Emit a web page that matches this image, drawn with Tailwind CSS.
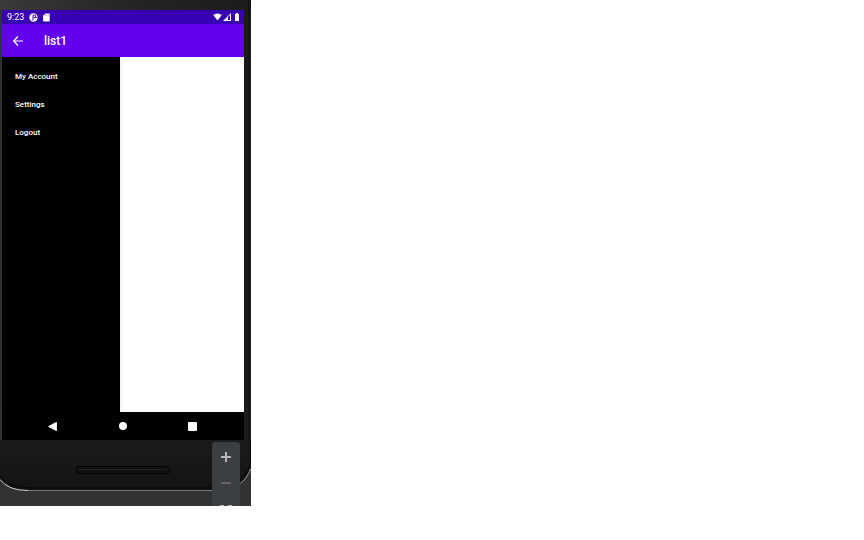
<!DOCTYPE html>
<html lang="en">
<head>
<meta charset="utf-8">
<title>list1</title>
<script src="https://cdn.jsdelivr.net/npm/@tailwindcss/browser@4"></script>
</head>
<body class="bg-white font-['Roboto',sans-serif] text-white">
<main class="relative w-[251px] overflow-hidden bg-linear-to-r from-[#343434] to-[#1b1b1b] to-25%">
  <div class="h-[10px] border-r border-[#0c0c0c] bg-linear-to-r from-[#3a3a3a] via-[#252525] to-[#1c1c1c]"></div>
  <section class="ml-[2px] mr-[7px] flex flex-col bg-black">
    <div class="flex h-[14px] items-center bg-[#3700b3] pl-[5px] pr-1 text-[9px] leading-[14px]">
      <span>9:23</span>
      <svg class="ml-[5px] size-[9px]" viewBox="0 0 9 9" aria-hidden="true"><circle cx="4.5" cy="4.5" r="4.2" fill="#fff"/><path d="M4 7.500V2H6.500V4.600H4M6.500 4.500H8.500" fill="none" stroke="#3700b3" stroke-width=".9"/></svg>
      <svg class="ml-[5px] h-[9px] w-[7px]" viewBox="0 0 7 9" aria-hidden="true"><path d="M2.400.5H6q.7 0 .7.7v6.600q0 .7-.7.7H.8q-.7 0-.7-.7V2.800z" fill="#fff"/><path d="M2.600 1.600v1.200M4 1.600v1.200M5.400 1.600v1.200" stroke="#3700b3" stroke-width=".4"/></svg>
      <svg class="ml-auto h-[8px] w-[9px]" viewBox="0 0 9 8" aria-hidden="true"><path d="M.2 2Q4.500-1 8.800 2L4.500 7.600z" fill="#fff"/></svg>
      <svg class="ml-px size-[8px]" viewBox="0 0 8 8" aria-hidden="true"><path d="M0 8L8 0V8z" fill="#fff"/><path d="M5 4L7 2V7H5z" fill="#3700b3"/></svg>
      <svg class="ml-1 mr-px h-[8px] w-[4px]" viewBox="0 0 4 8" aria-hidden="true"><path d="M1 0h2v1h1v7H0V1h1z" fill="#fff"/></svg>
    </div>
    <header class="flex h-[33px] items-center bg-[#6200ee] pl-[11px]">
      <button class="block" aria-label="Back"><svg class="size-[10px]" viewBox="0 0 10 10"><path d="M10 5H.8M5 .5L.7 5 5 9.500" fill="none" stroke="#fff" stroke-width="1.200"/></svg></button>
      <h1 class="ml-[21px] text-[12px] font-medium leading-4">list1</h1>
    </header>
    <div class="flex h-[355px] bg-white">
      <nav class="flex w-[118px] flex-col bg-black pl-[13px] pt-[6px] text-[8px] font-medium leading-7 shadow-[0_0_4px_#0002]">
        <a href="#account">My Account</a>
        <a href="#settings">Settings</a>
        <a href="#logout">Logout</a>
      </nav>
    </div>
    <footer class="flex h-7 items-center justify-between pl-[46px] pr-[47px]">
      <button class="block" aria-label="Back"><svg class="size-[9px]" viewBox="0 0 9 9"><path d="M.5 4.500L8.500.2V8.800z" fill="#fff" stroke="#fff" stroke-width=".8" stroke-linejoin="round"/></svg></button>
      <button class="block size-[8px] rounded-full bg-white" aria-label="Home"></button>
      <button class="block size-[9px] rounded-[1px] bg-white" aria-label="Recent apps"></button>
    </footer>
  </section>
  <svg class="block h-[66px] w-full" viewBox="0 0 251 66" aria-hidden="true">
    <defs><linearGradient id="shell" x1="0" y1="0" x2="0" y2="1"><stop offset="0" stop-color="#1b1b1b"/><stop offset="1" stop-color="#131313"/></linearGradient></defs>
    <path d="M0 0H251V66H0z" fill="#313234"/>
    <path d="M0 0H251V29Q242 48 225 50.500H30Q8 50.500 0 39z" fill="url(#shell)"/>
    <path d="M0 36Q9 48 30 48H212Q242 47 251 24" fill="none" stroke="#050505"/>
    <path d="M0 39.500Q8 50.500 28 50.500" fill="none" stroke="#d0d0d0"/>
    <path d="M28 50.500H220" fill="none" stroke="#777"/>
    <path d="M236 46Q246 41 250.500 29" fill="none" stroke="#c5c5c5" stroke-dasharray="2 .6"/>
    <rect x="76.500" y="26.500" width="93" height="7" rx="2.500" fill="#101010" stroke="#050505"/>
    <path d="M79 29.500H167" stroke="#242424"/>
    <path d="M250.500 0V26" stroke="#080808"/>
  </svg>
  <div class="absolute bottom-0 right-[11px] flex h-[64px] w-7 flex-col items-center overflow-hidden rounded-t-[3px] bg-[#3c3f41] pt-[10px]">
    <button class="block" aria-label="Zoom in"><svg class="size-[10px]" viewBox="0 0 10 10"><path d="M5 0V10M0 5H10" stroke="#b4b6b8" stroke-width="2"/></svg></button>
    <button class="mt-[16px] block" aria-label="Zoom out"><svg class="size-[10px]" viewBox="0 0 10 10"><path d="M0 5H10" stroke="#646669" stroke-width="2"/></svg></button>
    <button class="mt-[16px] block" aria-label="Zoom to fit"><svg class="h-[2px] w-[12px]" viewBox="0 0 12 2"><path d="M0 1H4V2H0zM8 1H12V2H8z" fill="#b4b6b8"/></svg></button>
  </div>
  <div class="absolute right-[2px] top-0 h-[440px] w-px bg-[#111]"></div>
</main>
</body>
</html>
